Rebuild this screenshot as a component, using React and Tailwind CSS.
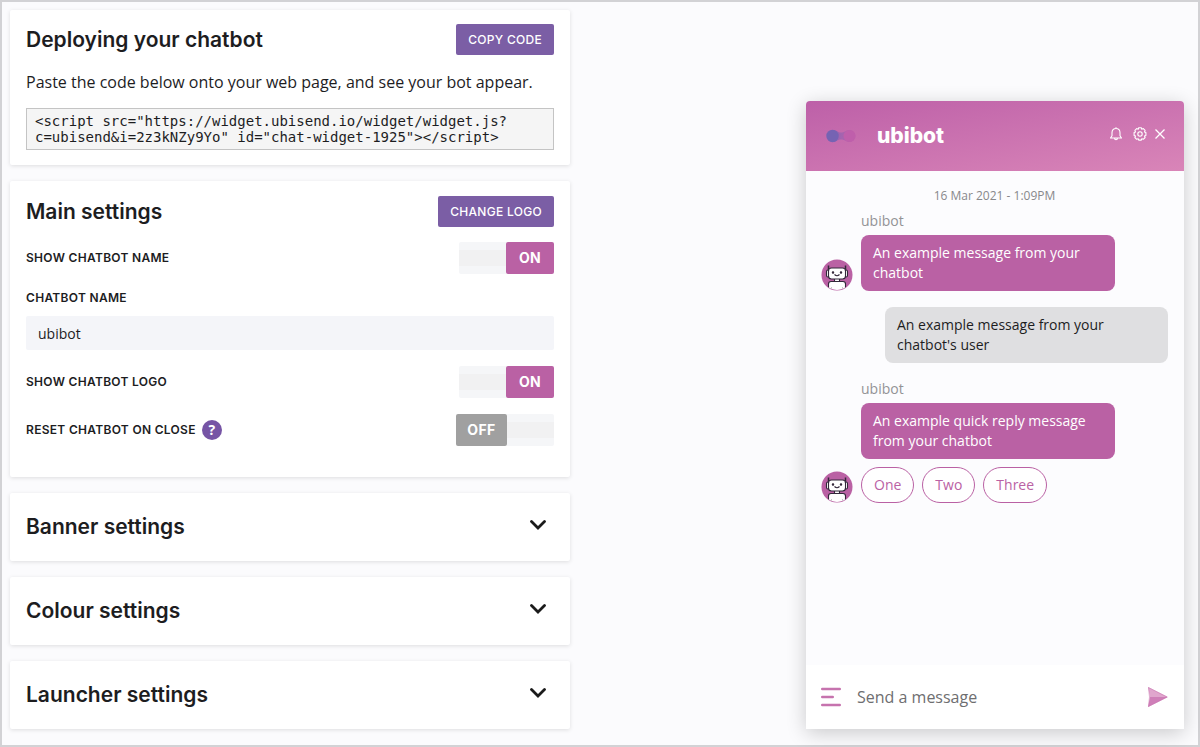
import { useState } from 'react';

const SNIPPET =
  '<script src="https://widget.ubisend.io/widget/widget.js?c=ubisend&i=2z3kNZy9Yo" id="chat-widget-1925"></script>';

function Card({ children }) {
  return <section className="rounded-xs bg-white px-4 shadow-[0_1px_4px_rgba(0,0,0,0.12)]">{children}</section>;
}

function PrimaryButton({ children }) {
  return (
    <button
      type="button"
      className="h-[31px] rounded-xs bg-[#7b5ea5] px-3 font-['Inter',sans-serif] text-xs font-medium tracking-wide text-white uppercase"
    >
      {children}
    </button>
  );
}

function Title({ children }) {
  return <h2 className="font-['Inter',sans-serif] text-[21px] leading-7 font-semibold text-[#1d1d1f]">{children}</h2>;
}

function Toggle({ id, defaultChecked }) {
  const [checked, setChecked] = useState(defaultChecked);

  return (
    <label
      htmlFor={id}
      className="flex h-8 cursor-pointer font-['Inter',sans-serif] text-sm font-bold tracking-wide text-white"
    >
      <input
        id={id}
        type="checkbox"
        className="sr-only"
        checked={checked}
        onChange={(e) => setChecked(e.target.checked)}
      />
      {checked ? (
        <>
          <span className="w-[47px] rounded-l-xs border-y-8 border-[#f5f6f8] bg-[#f1f1f2]" />
          <span className="flex w-12 items-center justify-center rounded-xs bg-[#ba61a4]">ON</span>
        </>
      ) : (
        <>
          <span className="flex w-[51px] items-center justify-center rounded-xs bg-[#a0a0a0]">OFF</span>
          <span className="w-[47px] rounded-r-xs border-y-8 border-[#f5f6f8] bg-[#f1f1f2]" />
        </>
      )}
    </label>
  );
}

function SettingRow({ id, label, help, defaultChecked }) {
  return (
    <div className="flex items-center justify-between">
      <div className="flex items-center gap-1.5">
        <label
          htmlFor={id}
          className="font-['Inter',sans-serif] text-xs font-semibold tracking-wide text-[#1d1d1f] uppercase"
        >
          {label}
        </label>
        {help && (
          <button
            type="button"
            aria-label="Help"
            className="flex size-5 items-center justify-center rounded-full bg-[#7654a5] text-sm font-bold text-white"
          >
            ?
          </button>
        )}
      </div>
      <Toggle id={id} defaultChecked={defaultChecked} />
    </div>
  );
}

function CollapsedCard({ title }) {
  return (
    <Card>
      <button type="button" aria-expanded="false" className="flex h-[68px] w-full items-center justify-between pr-2 text-left">
        <Title>{title}</Title>
        <svg viewBox="0 0 16 10" className="mb-1 h-[10px] w-4" fill="none" stroke="#1b1b1b" strokeWidth="2.8">
          <path d="M1.5 1.5 8 8l6.5-6.5" strokeLinecap="round" />
        </svg>
      </button>
    </Card>
  );
}

function RobotAvatar() {
  return (
    <svg viewBox="0 0 32 32" className="size-8 shrink-0" aria-hidden="true">
      <defs>
        <clipPath id="avatar-circle">
          <circle cx="16" cy="16" r="15" />
        </clipPath>
      </defs>
      <circle cx="16" cy="16" r="15.5" fill="#ba61a4" />
      <g clipPath="url(#avatar-circle)" stroke="#33283a" strokeWidth="1.1">
        <path d="M7.500 11V6.500M24.500 11V6.500" strokeWidth="1.5" />
        <rect x="5.5" y="11" width="4" height="7" rx="1.5" fill="#fff" />
        <rect x="22.5" y="11" width="4" height="7" rx="1.5" fill="#fff" />
        <rect x="13.5" y="18" width="5" height="5" fill="#fff" />
        <rect x="7.5" y="9" width="17" height="11" rx="3" fill="#fff" />
        <path d="M7.5 32v-7a2.5 2.5 0 0 1 2.5-2.5h12a2.5 2.5 0 0 1 2.5 2.5v7z" fill="#fff" />
        <path d="M10.5 28v4M21.5 28v4" stroke="#bbb" strokeWidth="0.8" />
        <path d="M13.500 15.500q2.500 2.500 5 0" fill="none" />
        <circle cx="12" cy="13.5" r="0.7" fill="#33283a" />
        <circle cx="20" cy="13.5" r="0.7" fill="#33283a" />
      </g>
    </svg>
  );
}

function BotLogo() {
  return (
    <svg viewBox="0 0 30 14" className="h-[14px] w-[30px]" aria-hidden="true">
      <defs>
        <linearGradient id="logo-fill">
          <stop offset="0" stopColor="#7b62b4" />
          <stop offset="1" stopColor="#c05fab" />
        </linearGradient>
      </defs>
      <path
        d="M7 1c4 0 4 2.500 8 2.500S20 1 23.500 1a6 6 0 0 1 0 12c-3.500 0-4.500-2.500-8.500-2.500S11 13 7 13z"
        fill="url(#logo-fill)"
        opacity="0.7"
      />
      <circle cx="6.5" cy="7" r="6.2" fill="#7563b3" />
      <circle cx="23.5" cy="7" r="6" fill="#bf5fab" />
    </svg>
  );
}

function ChatHeader() {
  return (
    <header className="flex h-[70px] items-center bg-linear-[170deg] from-[#bd60a8] to-[#d985b8] pr-4 pl-5">
      <BotLogo />
      <h2 className="ml-[21px] font-['Inter',sans-serif] text-[21px] leading-7 font-extrabold text-white">ubibot</h2>
      <div className="mb-1 ml-auto flex items-center gap-1 text-white">
        <button type="button" aria-label="Notifications" className="mr-1">
          <svg viewBox="0 0 16 16" className="size-4" fill="none" stroke="currentColor" strokeWidth="1.1" strokeLinejoin="round">
            <path d="M8 2.500c-2.600 0-4 1.900-4 4.200v3L2.500 12h11L12 9.700v-3c0-2.300-1.400-4.200-4-4.200zM8 1.200v1.300M6.500 12a1.500 1.700 0 0 0 3 0" />
          </svg>
        </button>
        <button type="button" aria-label="Settings">
          <svg viewBox="0 0 16 16" className="size-4" fill="none" stroke="currentColor" strokeWidth="1.1" strokeLinejoin="round">
            <path d="M6.700 1.800h2.600l.5 1.400 1.500-.6 1.800 1.800-.6 1.500 1.400.6v2.900l-1.400.6.6 1.500-1.800 1.800-1.500-.6-.5 1.400H6.700l-.5-1.400-1.500.6-1.800-1.800.6-1.500-1.400-.6V6.500l1.400-.6-.6-1.500 1.800-1.800 1.500.6z" />
            <circle cx="8" cy="8" r="2.2" />
          </svg>
        </button>
        <button type="button" aria-label="Close">
          <svg viewBox="0 0 16 16" className="size-4" fill="none" stroke="currentColor" strokeWidth="1.3">
            <path d="m3.500 3.500 9 9M12.500 3.500l-9 9" />
          </svg>
        </button>
      </div>
    </header>
  );
}

function BotMessage({ text, replies }) {
  return (
    <div className="flex items-end gap-2">
      <RobotAvatar />
      <div>
        <p className="text-sm leading-5 text-[#939396]">ubibot</p>
        <p className="mt-1 w-[254px] rounded-lg bg-[#ba61a4] px-3 py-2 text-sm text-white">{text}</p>
        {replies && (
          <div className="mt-2 flex gap-2">
            {replies.map((reply) => (
              <button
                key={reply}
                type="button"
                className="h-9 rounded-full border border-[#ba61a4] bg-white px-3 text-sm text-[#ba61a4]"
              >
                {reply}
              </button>
            ))}
          </div>
        )}
      </div>
    </div>
  );
}

function ChatWidget() {
  return (
    <aside className="flex min-h-[628px] w-[378px] shrink-0 flex-col overflow-hidden rounded-t-sm bg-white shadow-[0_4px_20px_rgba(0,0,0,0.2)]">
      <ChatHeader />
      <div className="flex flex-1 flex-col bg-[#fcfcfe] pt-[17px] pr-4 pl-[15px]">
        <p className="text-center text-xs leading-4 text-[#88888b]">16 Mar 2021 - 1:09PM</p>
        <div className="mt-[7px] flex flex-col gap-4">
          <BotMessage text="An example message from your chatbot" />
          <p className="w-[283px] self-end rounded-lg bg-[#dfdfe1] px-3 py-2 text-sm text-[#1d1d1f]">
            An example message from your chatbot's user
          </p>
          <BotMessage text="An example quick reply message from your chatbot" replies={['One', 'Two', 'Three']} />
        </div>
      </div>
      <form className="flex h-16 items-center bg-white pr-4 pl-[15px]" onSubmit={(e) => e.preventDefault()}>
        <button type="button" aria-label="Menu">
          <svg viewBox="0 0 20 20" className="size-5" stroke="#c673ae" strokeWidth="2.4" strokeLinecap="round">
            <path d="M1.200 2h17.600M1.200 10h10.600M1.200 18h17.600" />
          </svg>
        </button>
        <input
          aria-label="Send a message"
          placeholder="Send a message"
          className="ml-4 min-w-0 flex-1 text-base outline-none placeholder:text-[#6e6e70]"
        />
        <button type="submit" aria-label="Send">
          <svg viewBox="0 0 20 20" className="size-5">
            <path d="M0 0 20 10H2z" fill="#e0a6cd" />
            <path d="M2 10h18L0 20z" fill="#cf7fb8" />
            <path d="M.5.500 19 10 .5 19.500 1.500 10z" fill="none" stroke="#cb79b3" strokeWidth="0.6" />
          </svg>
        </button>
      </form>
    </aside>
  );
}

export default function App() {
  return (
    <main className="flex min-h-screen justify-between gap-6 border-2 border-[#d2d2d5] bg-[#fbfbfd] pt-2 pr-[14px] pb-4 pl-2 font-['Open_Sans',sans-serif] text-[#1d1d1f]">
      <div className="flex max-w-[560px] flex-1 flex-col gap-4">
        <Card>
          <div className="flex items-center justify-between pt-[14px]">
            <Title>Deploying your chatbot</Title>
            <PrimaryButton>Copy code</PrimaryButton>
          </div>
          <p className="mt-[15px] text-base">Paste the code below onto your web page, and see your bot appear.</p>
          <div className="pt-[14px] pb-[15px]">
            <pre className="border border-[#c4c4c4] bg-[#f5f5f5] px-2 py-1 font-['DejaVu_Sans_Mono',monospace] text-sm leading-4 break-words whitespace-pre-wrap">
              {SNIPPET}
            </pre>
          </div>
        </Card>

        <Card>
          <div className="flex items-center justify-between pt-[15px]">
            <Title>Main settings</Title>
            <PrimaryButton>Change logo</PrimaryButton>
          </div>
          <div className="flex flex-col gap-4 pt-[15px] pb-[31px]">
            <SettingRow id="show-name" label="Show chatbot name" defaultChecked />
            <div>
              <label
                htmlFor="chatbot-name"
                className="block font-['Inter',sans-serif] text-xs font-semibold tracking-wide uppercase"
              >
                Chatbot name
              </label>
              <input
                id="chatbot-name"
                defaultValue="ubibot"
                className="mt-[10px] block h-[34px] w-full rounded-xs bg-[#f4f5f9] px-3 text-sm outline-none"
              />
            </div>
            <SettingRow id="show-logo" label="Show chatbot logo" defaultChecked />
            <SettingRow id="reset-on-close" label="Reset chatbot on close" help defaultChecked={false} />
          </div>
        </Card>

        <CollapsedCard title="Banner settings" />
        <CollapsedCard title="Colour settings" />
        <CollapsedCard title="Launcher settings" />
      </div>

      <div className="flex items-end">
        <ChatWidget />
      </div>
    </main>
  );
}
